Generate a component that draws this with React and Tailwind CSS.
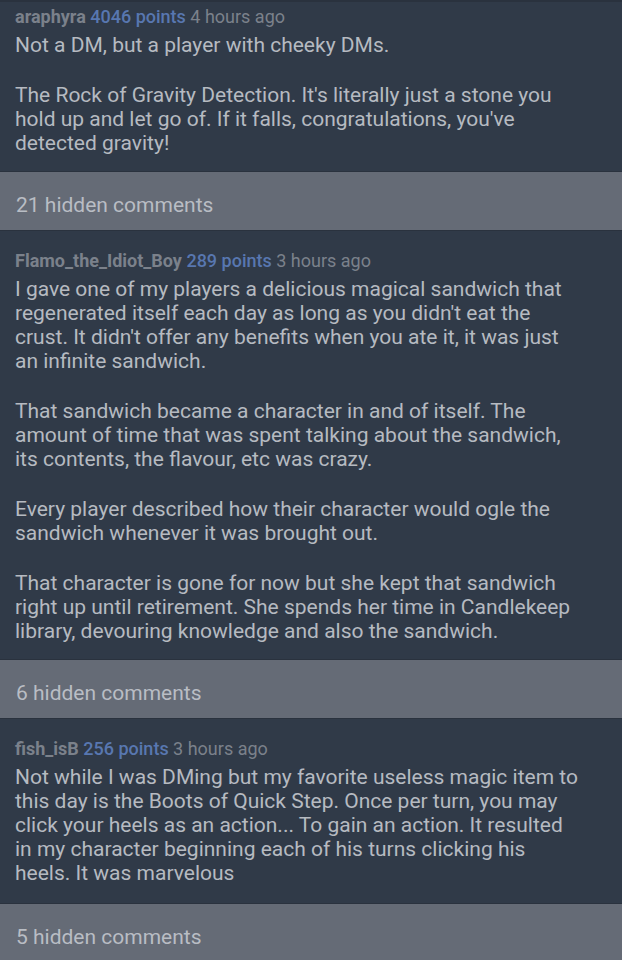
export default function App() {
  const comments = [
    {
      user: "araphyra",
      points: "4046 points",
      time: "4 hours ago",
      paras: [
        "Not a DM, but a player with cheeky DMs.",
        "The Rock of Gravity Detection. It's literally just a stone you hold up and let go of. If it falls, congratulations, you've detected gravity!",
      ],
      hidden: "21 hidden comments",
      first: true,
    },
    {
      user: "Flamo_the_Idiot_Boy",
      points: "289 points",
      time: "3 hours ago",
      paras: [
        "I gave one of my players a delicious magical sandwich that regenerated itself each day as long as you didn't eat the crust. It didn't offer any benefits when you ate it, it was just an infinite sandwich.",
        "That sandwich became a character in and of itself. The amount of time that was spent talking about the sandwich, its contents, the flavour, etc was crazy.",
        "Every player described how their character would ogle the sandwich whenever it was brought out.",
        "That character is gone for now but she kept that sandwich right up until retirement. She spends her time in Candlekeep library, devouring knowledge and also the sandwich.",
      ],
      hidden: "6 hidden comments",
    },
    {
      user: "fish_isB",
      points: "256 points",
      time: "3 hours ago",
      paras: [
        "Not while I was DMing but my favorite useless magic item to this day is the Boots of Quick Step. Once per turn, you may click your heels as an action... To gain an action. It resulted in my character beginning each of his turns clicking his heels. It was marvelous",
      ],
      hidden: "5 hidden comments",
      last: true,
    },
  ];
  return (
    <div
      className="w-[622px] h-[960px] overflow-hidden bg-[#303a48]"
      style={{ fontFamily: "Roboto, 'Noto Sans', sans-serif" }}
    >
      {comments.map((c, i) => (
        <div key={i}>
          <div
            className={`pl-[15px] pr-[41px] ${c.last ? "pb-[18px]" : "pb-4"} ${c.first ? "pt-[5px] border-t-2 border-[#2a323e]" : "pt-5"}`}
          >
            <div className="h-5 leading-5 text-[18px] whitespace-nowrap">
              <span className="font-bold text-[#7b818b]">{c.user}</span>{" "}
              <span className="font-medium text-[#5877b0]">{c.points}</span>{" "}
              <span className="text-[#7b818b]">{c.time}</span>
            </div>
            <div className="mt-[6px] text-[21px] leading-[24px] text-[#b6bac1]">
              {c.paras.map((p, j) => (
                <p key={j} className={j > 0 ? "mt-[26px]" : ""}>
                  {p}
                </p>
              ))}
            </div>
          </div>
          <div className="h-[60px] bg-[#656b76] border-y border-[#2a323e] flex items-center pl-[16px] pt-[10px] text-[21px] text-[#b9bdc4]">
            {c.hidden}
          </div>
        </div>
      ))}
    </div>
  );
}
